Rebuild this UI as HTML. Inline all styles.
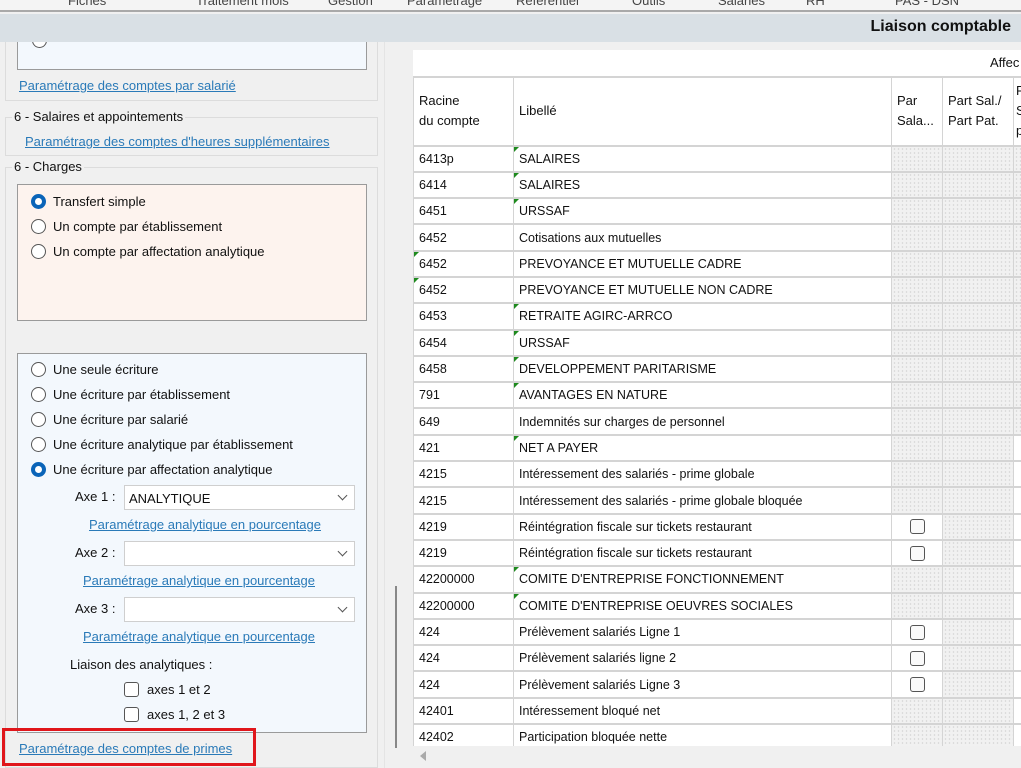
<!DOCTYPE html>
<html><head><meta charset="utf-8"><style>
*{box-sizing:border-box;margin:0;padding:0}
body{width:1021px;height:768px;overflow:hidden;background:#f0f0f0;font-family:"Liberation Sans","DejaVu Sans",sans-serif;font-size:13px;color:#111;position:relative}
.abs{position:absolute}
.menu{left:0;top:0;width:1021px;height:12px;background:#f4f4f4;border-bottom:2px solid #a9a9a9;overflow:hidden}
.menu span{position:absolute;top:-7px;font-size:13px;color:#444}
.title{left:0;top:14px;width:1021px;height:28px;background:#d9e0e5;}
.title b{position:absolute;right:10px;top:4px;font-size:16px;color:#111}
a{color:#2a7ab8;text-decoration:underline;font-size:13px}
.grp{border:1px solid #dcdcdc}
.box{border:1px solid #9a9a9a}
.rad{position:absolute;width:15px;height:15px;border-radius:50%;border:1px solid #555;background:#fff}
.rad.on{border:4px solid #0a64b8;background:#fff}
.lbl{position:absolute;font-size:13px}
.sel{position:absolute;background:#fff;border:1px solid #cfcfcf;height:25px}
.sel::after{content:"";position:absolute;right:8px;top:6px;width:6px;height:6px;border-right:1.3px solid #555;border-bottom:1.3px solid #555;transform:rotate(45deg)}
.cb{position:absolute;width:15px;height:15px;border:1px solid #555;border-radius:3px;background:#fff}
table{border-collapse:collapse;position:absolute;left:413px;top:77px;table-layout:fixed;background:#fff}
td{border:1px solid #d4d4d4;border-top:2px solid #d4d4d4;height:26.3px;padding:0 5px;font-size:12.5px;white-space:nowrap;overflow:hidden;position:relative}
th{border:1px solid #d4d4d4;font-weight:normal;text-align:left;padding:0 5px;font-size:13px;height:68px;line-height:20px;vertical-align:middle}
.h{background-color:#f1f1f1;background-image:radial-gradient(#d2d2d2 0.6px,transparent 0.9px);background-size:4px 4px}
.f::before{content:"";position:absolute;left:0;top:0;border-top:5px solid #1e8a1e;border-right:5px solid transparent}
.c{text-align:center}
.c span{display:inline-block;width:15px;height:15px;border:1px solid #555;border-radius:3px;vertical-align:middle;background:#fafafa}
</style></head><body>
<div class="abs menu">
<span style="left:68px">Fiches</span><span style="left:196px">Traitement mois</span><span style="left:328px">Gestion</span><span style="left:407px">Paramétrage</span><span style="left:516px">Référentiel</span><span style="left:632px">Outils</span><span style="left:718px">Salariés</span><span style="left:806px">RH</span><span style="left:895px">PAS - DSN</span>
</div>
<div class="abs title"><b>Liaison comptable</b></div>

<div class="abs grp" style="left:5px;top:42px;width:373px;height:59px;border-top:none"></div>
<div class="abs box" style="left:17px;top:42px;width:350px;height:28px;background:#f3f8fd;border-top:none;overflow:hidden"><div class="rad" style="left:14px;top:-9px"></div></div>
<a class="abs" style="left:19px;top:78px">Paramétrage des comptes par salarié</a>
<div class="abs grp" style="left:5px;top:117px;width:373px;height:39px"></div>
<div class="abs lbl" style="left:12px;top:109px;background:#f0f0f0;padding:0 2px">6 - Salaires et appointements</div>
<a class="abs" style="left:25px;top:134px">Paramétrage des comptes d'heures supplémentaires</a>
<div class="abs grp" style="left:5px;top:167px;width:373px;height:601px"></div>
<div class="abs lbl" style="left:12px;top:159px;background:#f0f0f0;padding:0 2px">6 - Charges</div>
<div class="abs box" style="left:17px;top:184px;width:350px;height:137px;background:#fdf3ee"></div>
<div class="rad on" style="left:31px;top:194px"></div><div class="lbl" style="left:53px;top:194px">Transfert simple</div>
<div class="rad" style="left:31px;top:219px"></div><div class="lbl" style="left:53px;top:219px">Un compte par établissement</div>
<div class="rad" style="left:31px;top:244px"></div><div class="lbl" style="left:53px;top:244px">Un compte par affectation analytique</div>

<div class="abs box" style="left:17px;top:353px;width:350px;height:380px;background:#f3f8fd"></div>
<div class="rad" style="left:31px;top:362px"></div><div class="lbl" style="left:53px;top:362px">Une seule écriture</div>
<div class="rad" style="left:31px;top:387px"></div><div class="lbl" style="left:53px;top:387px">Une écriture par établissement</div>
<div class="rad" style="left:31px;top:412px"></div><div class="lbl" style="left:53px;top:412px">Une écriture par salarié</div>
<div class="rad" style="left:31px;top:437px"></div><div class="lbl" style="left:53px;top:437px">Une écriture analytique par établissement</div>
<div class="rad on" style="left:31px;top:462px"></div><div class="lbl" style="left:53px;top:462px">Une écriture par affectation analytique</div>
<div class="lbl" style="left:75px;top:489px">Axe 1 :</div>
<div class="sel" style="left:124px;top:485px;width:231px"><span style="position:absolute;left:4px;top:5px;font-size:13px">ANALYTIQUE</span></div>
<a class="abs" style="left:89px;top:517px">Paramétrage analytique en pourcentage</a>
<div class="lbl" style="left:75px;top:545px">Axe 2 :</div>
<div class="sel" style="left:124px;top:541px;width:231px"></div>
<a class="abs" style="left:83px;top:573px">Paramétrage analytique en pourcentage</a>
<div class="lbl" style="left:75px;top:601px">Axe 3 :</div>
<div class="sel" style="left:124px;top:597px;width:231px"></div>
<a class="abs" style="left:83px;top:629px">Paramétrage analytique en pourcentage</a>
<div class="lbl" style="left:70px;top:657px">Liaison des analytiques :</div>
<div class="cb" style="left:124px;top:682px"></div><div class="lbl" style="left:147px;top:682px">axes 1 et 2</div>
<div class="cb" style="left:124px;top:707px"></div><div class="lbl" style="left:147px;top:707px">axes 1, 2 et 3</div>
<a class="abs" style="left:19px;top:741px">Paramétrage des comptes de primes</a>
<div class="abs" style="left:2px;top:728px;width:254px;height:38px;border:3px solid #e0161b"></div>
<div class="abs" style="left:395px;top:586px;width:2px;height:162px;background:#888"></div>
<div class="abs" style="left:384px;top:42px;width:1px;height:726px;background:#e4e4e4"></div>

<div class="abs" style="left:413px;top:50px;width:608px;height:27px;background:#fff;border-bottom:1px solid #d4d4d4"><span style="position:absolute;left:577px;top:5px;font-size:13px">Affec</span></div>
<table style="width:620px">
<colgroup><col style="width:100px"><col style="width:378px"><col style="width:51px"><col style="width:71px"><col style="width:20px"></colgroup>
<tr><th>Racine<br>du compte</th><th>Libellé</th><th>Par<br>Sala...</th><th>Part Sal./<br>Part Pat.</th><th style="padding:0 2px">F<br>S<br>p</th></tr>
<tr><td>6413p</td><td class="f">SALAIRES</td><td class="h"></td><td class="h"></td><td class="h"></td></tr>
<tr><td>6414</td><td class="f">SALAIRES</td><td class="h"></td><td class="h"></td><td class="h"></td></tr>
<tr><td>6451</td><td class="f">URSSAF</td><td class="h"></td><td class="h"></td><td class="h"></td></tr>
<tr><td>6452</td><td>Cotisations aux mutuelles</td><td class="h"></td><td class="h"></td><td class="h"></td></tr>
<tr><td class="f">6452</td><td>PREVOYANCE ET MUTUELLE CADRE</td><td class="h"></td><td class="h"></td><td class="h"></td></tr>
<tr><td class="f">6452</td><td>PREVOYANCE ET MUTUELLE NON CADRE</td><td class="h"></td><td class="h"></td><td class="h"></td></tr>
<tr><td>6453</td><td class="f">RETRAITE AGIRC-ARRCO</td><td class="h"></td><td class="h"></td><td class="h"></td></tr>
<tr><td>6454</td><td class="f">URSSAF</td><td class="h"></td><td class="h"></td><td class="h"></td></tr>
<tr><td>6458</td><td class="f">DEVELOPPEMENT PARITARISME</td><td class="h"></td><td class="h"></td><td class="h"></td></tr>
<tr><td>791</td><td class="f">AVANTAGES EN NATURE</td><td class="h"></td><td class="h"></td><td class="h"></td></tr>
<tr><td>649</td><td>Indemnités sur charges de personnel</td><td class="h"></td><td class="h"></td><td class="h"></td></tr>
<tr><td>421</td><td class="f">NET A PAYER</td><td class="h"></td><td class="h"></td><td></td></tr>
<tr><td>4215</td><td>Intéressement des salariés - prime globale</td><td class="h"></td><td class="h"></td><td></td></tr>
<tr><td>4215</td><td>Intéressement des salariés - prime globale bloquée</td><td class="h"></td><td class="h"></td><td></td></tr>
<tr><td>4219</td><td>Réintégration fiscale sur tickets restaurant</td><td class="c"><span></span></td><td class="h"></td><td></td></tr>
<tr><td>4219</td><td>Réintégration fiscale sur tickets restaurant</td><td class="c"><span></span></td><td class="h"></td><td></td></tr>
<tr><td>42200000</td><td class="f">COMITE D'ENTREPRISE FONCTIONNEMENT</td><td class="h"></td><td class="h"></td><td></td></tr>
<tr><td>42200000</td><td class="f">COMITE D'ENTREPRISE OEUVRES SOCIALES</td><td class="h"></td><td class="h"></td><td></td></tr>
<tr><td>424</td><td>Prélèvement salariés Ligne 1</td><td class="c"><span></span></td><td class="h"></td><td></td></tr>
<tr><td>424</td><td>Prélèvement salariés ligne 2</td><td class="c"><span></span></td><td class="h"></td><td></td></tr>
<tr><td>424</td><td>Prélèvement salariés Ligne 3</td><td class="c"><span></span></td><td class="h"></td><td></td></tr>
<tr><td>42401</td><td>Intéressement bloqué net</td><td class="h"></td><td class="h"></td><td></td></tr>
<tr><td>42402</td><td>Participation bloquée nette</td><td class="h"></td><td class="h"></td><td></td></tr>
</table>
<div class="abs" style="left:405px;top:746px;width:616px;height:22px;background:#f0f0f0"></div>
<div class="abs" style="left:420px;top:751px;width:0;height:0;border-top:5px solid transparent;border-bottom:5px solid transparent;border-right:6px solid #aaa"></div>
</body></html>
